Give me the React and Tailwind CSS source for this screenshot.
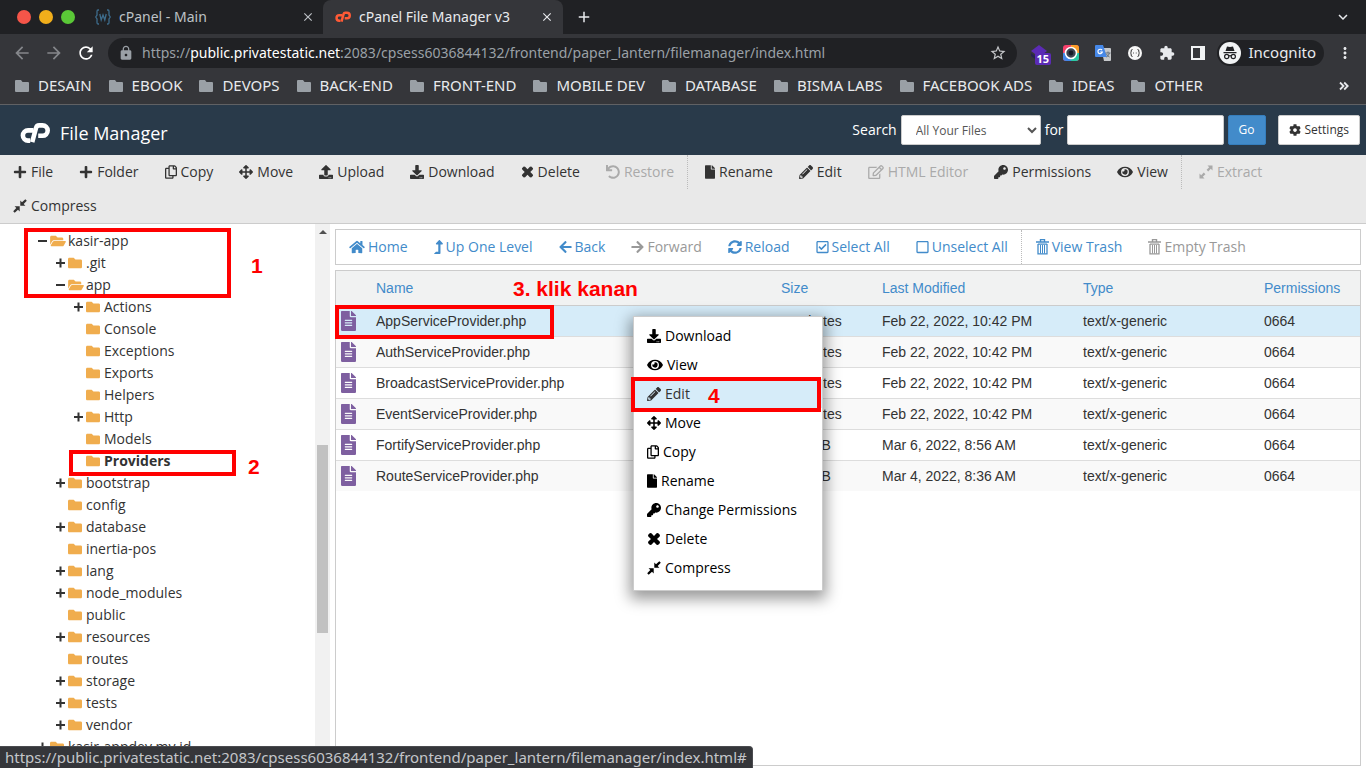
import React from "react";
import {
  FaPlus, FaRegCopy, FaArrowsAlt, FaUpload, FaDownload, FaUndo, FaFile, FaPencilAlt,
  FaRegEdit, FaKey, FaEye, FaHome, FaLevelUpAlt, FaArrowLeft, FaArrowRight, FaSyncAlt,
  FaRegCheckSquare, FaRegSquare, FaCog, FaFolder, FaFolderOpen, FaFileAlt,
} from "react-icons/fa";
import { MdArrowBack, MdArrowForward, MdRefresh, MdLock, MdStarBorder, MdExtension, MdAdd, MdClose, MdMoreVert, MdKeyboardArrowDown } from "react-icons/md";

const URL_REST = ":2083/cpsess6036844132/frontend/paper_lantern/filemanager/index.html";

function CpanelLogo({ className }) {
  return (
    <svg viewBox="0 0 30 21" className={className} fill="none" stroke="currentColor" strokeWidth="4.600" aria-hidden="true">
      <path d="M13.500 7.400H8a5.100 5.100 0 0 0 0 10.200h2.200" />
      <path d="M12.200 19.200 16 5q.7-2.600 3.200-2.600h3.300a5.200 5.200 0 0 1 0 10.400H18.200" strokeLinejoin="round" />
    </svg>
  );
}

function TimesIcon({ className }) {
  return (
    <svg viewBox="0 0 14 14" className={className} fill="currentColor" aria-hidden="true">
      <path d="M1 3 3 1l1.400.3L7 4l2.600-2.700L11 1l2 2-.3 1.400L10 7l2.700 2.600L13 11l-2 2-1.400-.3L7 10l-2.600 2.700L3 13l-2-2 .3-1.400L4 7 1.300 4.400z" />
    </svg>
  );
}

function CompressIcon({ className }) {
  return (
    <svg viewBox="0 0 14 14" className={className} fill="currentColor" aria-hidden="true">
      <path d="M7.300 1.600v5.100h5.100l-1.700-1.700 3.100-3.300L12.300.2 9 3.300zM6.700 12.400V7.300H1.600L3.300 9 .2 12.300l1.500 1.500L5 10.700z" />
    </svg>
  );
}

function ExpandIcon({ className }) {
  return (
    <svg viewBox="0 0 14 14" className={className} fill="currentColor" aria-hidden="true">
      <path d="M13.500.5v5L11.800 3.800 9.200 6.400 7.600 4.800l2.600-2.600L8.500.5zM.5 13.500v-5l1.700 1.700 2.600-2.600 1.600 1.600-2.600 2.600 1.700 1.700z" />
    </svg>
  );
}

function TrashIcon({ className }) {
  return (
    <svg viewBox="0 0 13 16" className={className} fill="none" stroke="currentColor" aria-hidden="true">
      <path d="M0 3h13M4.500 2.500V.6h4v1.900" strokeWidth="1.400" />
      <path d="M2 5v9.900h9V5M2 5.200h9" strokeWidth="1.300" />
      <path d="M4.500 6v8.500M6.500 6v8.500M8.500 6v8.500" />
    </svg>
  );
}

function BookmarkFolder() {
  return (
    <svg viewBox="0 0 14 12" className="h-3 w-3.5 shrink-0" fill="#9aa0a6" aria-hidden="true">
      <path d="M1 0h5l1.500 2H13a1 1 0 0 1 1 1v8a1 1 0 0 1-1 1H1a1 1 0 0 1-1-1V1a1 1 0 0 1 1-1z" />
    </svg>
  );
}

const bookmarks = ["DESAIN", "EBOOK", "DEVOPS", "BACK-END", "FRONT-END", "MOBILE DEV", "DATABASE", "BISMA LABS", "FACEBOOK ADS", "IDEAS", "OTHER"];

function Browser() {
  return (
    <div className="shrink-0 border-b border-[#606164] bg-[#35363a] font-['Noto_Sans',sans-serif] text-sm text-[#e8eaed]">
      <div className="flex h-[34px] items-center bg-[#202124] pl-[17px]">
        <div className="flex shrink-0 gap-2">
          <span className="size-3.5 rounded-full bg-[#f55549]" />
          <span className="size-3.5 rounded-full bg-[#f1ae1b]" />
          <span className="size-3.5 rounded-full bg-[#5ac837]" />
        </div>
        <div className="flex h-full w-[248px] items-center pl-5 text-[#bdc1c6]">
          <svg viewBox="0 0 16 16" className="mr-2 size-4" fill="none" stroke="#3d6c8c" strokeWidth="1.300" aria-hidden="true">
            <path d="M4 1H3Q2 1 2 2.500V6L.7 8 2 10v3.500Q2 15 3 15h1M12 1h1q1 0 1 1.500V6l1.300 2L14 10v3.500q0 1.500-1 1.500h-1M4.800 5l1.400 6L8 6l1.800 5 1.400-6" />
          </svg>
          <span className="grow">cPanel - Main</span>
          <button aria-label="Close tab" className="mr-2"><MdClose className="size-3.5" /></button>
        </div>
        <div className="flex h-full w-[240px] items-center rounded-t-lg bg-[#35363a] pl-3">
          <CpanelLogo className="mr-2 size-4 text-[#ff5a36]" />
          <span className="grow">cPanel File Manager v3</span>
          <button aria-label="Close tab" className="mr-[9px]"><MdClose className="size-3.5" /></button>
        </div>
        <button aria-label="New tab" className="ml-3"><MdAdd className="size-[18px]" /></button>
        <button aria-label="Search tabs" className="mr-3.5 ml-auto"><MdKeyboardArrowDown className="size-[18px]" /></button>
      </div>
      <div className="flex h-[38px] items-center pr-3 pl-3">
        <button aria-label="Back" className="mr-3 text-[#85878b]"><MdArrowBack className="size-5" /></button>
        <button aria-label="Forward" className="mr-3 text-[#85878b]"><MdArrowForward className="size-5" /></button>
        <button aria-label="Reload page" className="mr-3 text-white"><MdRefresh className="size-5" /></button>
        <div className="flex h-[30px] grow items-center rounded-full bg-[#202124] pr-2.5 pl-2.5">
          <MdLock className="mr-2 size-4 text-[#9aa0a6]" />
          <span className="grow text-[#9aa0a6]">https://<span className="text-white">public.privatestatic.net</span>{URL_REST}</span>
          <MdStarBorder className="size-[18px] text-[#c5c7ca]" />
        </div>
        <div className="ml-3.5 flex items-center gap-4">
          <div className="relative h-5 w-4">
            <svg viewBox="0 0 16 20" className="h-5 w-4" aria-hidden="true">
              <path d="M8 2 0 8l8 6 8-6z" fill="#5b2bb5" /><path d="m0 10 8 6v3L0 13z" fill="#252250" />
            </svg>
            <span className="absolute top-2.5 left-1 rounded-xs bg-[#5b2bb5] px-0.5 text-[11px] leading-3 font-bold text-white">15</span>
          </div>
          <svg viewBox="0 0 16 16" className="size-4" aria-hidden="true">
            <rect width="16" height="16" rx="3" fill="#f6416c" /><path d="M8 0h5a3 3 0 0 1 3 3v5H8z" fill="#fb9d28" />
            <path d="M8 8h8v5a3 3 0 0 1-3 3H8z" fill="#28c9a5" /><path d="M0 8h8v8H3a3 3 0 0 1-3-3z" fill="#4387e9" />
            <circle cx="8" cy="8" r="5.500" fill="#3d4653" stroke="#fff" strokeWidth="1.600" /><circle cx="8" cy="8" r="2.400" fill="#161b28" />
          </svg>
          <svg viewBox="0 0 16 16" className="size-4" aria-hidden="true">
            <path d="M6 3h9a1 1 0 0 1 1 1v11a1 1 0 0 1-1 1H9z" fill="#c6c8cb" /><path d="M1 0h7l4 12H1a1 1 0 0 1-1-1V1a1 1 0 0 1 1-1z" fill="#4688e8" />
            <path d="M7 5.200A2.200 2.200 0 1 0 7.300 7H5.200" fill="none" stroke="#fff" strokeWidth="1.200" />
            <path d="M10.500 8h5M13 6.500V8m1.500 0q-1 3-3 4m0-3q1 2 3 3" fill="none" stroke="#65717d" />
          </svg>
          <svg viewBox="0 0 16 16" className="size-4" aria-hidden="true">
            <circle cx="8" cy="8" r="7" fill="#f7f7f7" /><path d="M5.500 4.500Q4 4.500 4.200 6 4.300 7.500 3.500 8q.8.500.7 2-.2 1.500 1.300 1.500M10.500 4.500q1.500 0 1.300 1.500-.1 1.500.7 2-.8.500-.7 2 .2 1.500-1.300 1.500M6.200 8h.8m1.800 0h.8" fill="none" stroke="#333" />
          </svg>
          <MdExtension className="size-4" />
          <svg viewBox="0 0 14 14" className="size-3.5" aria-hidden="true"><path d="M0 0h14v14H0zM2 2v10h7V2z" fill="#f1f3f4" fillRule="evenodd" /></svg>
        </div>
        <div className="ml-3 flex h-[26px] items-center rounded-full bg-[#202124] pr-2 text-[15px]">
          <svg viewBox="0 0 22 22" className="mr-2 ml-0.5 size-[22px]" aria-hidden="true">
            <circle cx="11" cy="11" r="11" fill="#f1f3f4" />
            <path d="M8 4.500 11 5l3-.5L15.500 9h-9zM4.500 10h13v1.300h-13z" fill="#202124" />
            <g fill="none" stroke="#202124" strokeWidth="1.200"><circle cx="7.700" cy="14.500" r="2.100" /><circle cx="14.300" cy="14.500" r="2.100" /><path d="M9.800 14q1.200-.7 2.400 0" /></g>
          </svg>
          Incognito
        </div>
        <button aria-label="Browser menu" className="ml-3"><MdMoreVert className="size-[18px]" /></button>
      </div>
      <nav className="flex h-8 items-center gap-[17px] pr-[17px] pb-1 pl-[15px] text-[15px]">
        {bookmarks.map((b) => (
          <a key={b} href="#" className="flex items-center gap-[9px] whitespace-nowrap"><BookmarkFolder />{b}</a>
        ))}
        <button aria-label="More bookmarks" className="ml-auto">
          <svg viewBox="0 0 10 10" className="size-2.5" fill="none" stroke="currentColor" strokeWidth="1.800" aria-hidden="true"><path d="m1 1.500 3.500 3.500L1 8.500M5.200 1.500 8.700 5 5.200 8.500" /></svg>
        </button>
      </nav>
    </div>
  );
}

function Header() {
  return (
    <header className="flex h-[50px] shrink-0 items-center bg-[#293a4a] pr-1.5 pl-5 text-sm text-white">
      <CpanelLogo className="mt-1.5 mr-2.5 h-[21px] w-[30px]" />
      <h1 className="mt-1.5 grow text-lg">File Manager</h1>
      <label htmlFor="scope" className="mr-1">Search</label>
      <select id="scope" className="mr-1 h-[30px] w-[140px] rounded-xs border border-[#ccc] bg-white px-2.5 text-xs text-[#555]">
        <option>All Your Files</option>
      </select>
      <label htmlFor="query" className="mr-[3px]">for</label>
      <input id="query" type="text" className="mr-1 h-[30px] w-[157px] rounded-xs border border-[#ccc] bg-white px-2 text-xs text-[#555]" />
      <button className="mr-3 h-[30px] rounded-xs border border-[#357ebd] bg-[#428bca] px-2.5 text-xs">Go</button>
      <button className="flex h-[30px] items-center gap-1 rounded-xs border border-[#ccc] bg-white px-2.5 text-xs text-[#333]"><FaCog className="size-3" />Settings</button>
    </header>
  );
}

function Tool({ icon: Icon, size = "h-3.5 w-3.5", label, off, divided, nav }) {
  const lead = divided ? (nav ? "border-l border-dotted border-[#bbb] pl-[14px]" : "border-l border-dotted border-[#bbb] pl-[17px]") : "pl-[13px]";
  const tint = nav ? (off ? "text-[#999]" : "text-[#428bca]") : off ? "text-[#aaa]" : "text-[#333]";
  return (
    <button disabled={off} className={`flex h-[34px] items-center whitespace-nowrap pr-[13px] ${nav ? "gap-[3px]" : "gap-1"} ${lead} ${tint}`}>
      <Icon className={`shrink-0 ${size}`} />
      {label}
    </button>
  );
}

const mainTools = [
  { icon: FaPlus, label: "File" },
  { icon: FaPlus, label: "Folder" },
  { icon: FaRegCopy, size: "h-3.5 w-3", label: "Copy" },
  { icon: FaArrowsAlt, label: "Move" },
  { icon: FaUpload, label: "Upload" },
  { icon: FaDownload, label: "Download" },
  { icon: TimesIcon, size: "h-3.5 w-[13px]", label: "Delete" },
  { icon: FaUndo, label: "Restore", off: true },
  { icon: FaFile, size: "h-3.5 w-2.5", label: "Rename", divided: true },
  { icon: FaPencilAlt, label: "Edit" },
  { icon: FaRegEdit, size: "h-3.5 w-4", label: "HTML Editor", off: true },
  { icon: FaKey, label: "Permissions" },
  { icon: FaEye, size: "h-3.5 w-4", label: "View" },
  { icon: ExpandIcon, label: "Extract", off: true, divided: true },
  { icon: CompressIcon, label: "Compress" },
];

const navTools = [
  { icon: FaHome, size: "h-3.5 w-4", label: "Home" },
  { icon: FaLevelUpAlt, size: "h-3.5 w-[9px]", label: "Up One Level" },
  { icon: FaArrowLeft, size: "h-3.5 w-[13px]", label: "Back" },
  { icon: FaArrowRight, size: "h-3.5 w-[13px]", label: "Forward", off: true },
  { icon: FaSyncAlt, label: "Reload" },
  { icon: FaRegCheckSquare, size: "h-3.5 w-[13px]", label: "Select All" },
  { icon: FaRegSquare, size: "h-3.5 w-[13px]", label: "Unselect All" },
  { icon: TrashIcon, size: "h-4 w-[13px]", label: "View Trash", divided: true },
  { icon: TrashIcon, size: "h-4 w-[13px]", label: "Empty Trash", off: true },
];

const tree = [
  ["kasir-app", 0, "-"], [".git", 1, "+"], ["app", 1, "-"], ["Actions", 2, "+"], ["Console", 2], ["Exceptions", 2],
  ["Exports", 2], ["Helpers", 2], ["Http", 2, "+"], ["Models", 2], ["Providers", 2, "", true], ["bootstrap", 1, "+"],
  ["config", 1], ["database", 1, "+"], ["inertia-pos", 1], ["lang", 1, "+"], ["node_modules", 1, "+"], ["public", 1],
  ["resources", 1, "+"], ["routes", 1], ["storage", 1, "+"], ["tests", 1, "+"], ["vendor", 1, "+"], ["kasir-appdev.my.id", 0, "+"],
];
const indent = ["pl-[37px]", "pl-[55px]", "pl-[73px]"];

function Sidebar() {
  return (
    <aside className="relative flex w-[330px] shrink-0 overflow-hidden bg-white">
      <ul className="grow pt-1.5">
        {tree.map(([name, level, toggle, current]) => (
          <li key={name} className={`flex h-[22px] items-center ${indent[level]}`}>
            <svg viewBox="0 0 13 14" className="h-3.5 w-[13px]" fill="none" stroke="#333" strokeWidth="2" aria-hidden="true">
              {toggle && <path d={toggle === "+" ? "M1 7h9M5.500 2.500v9" : "M1 7h9"} />}
            </svg>
            {toggle === "-" ? <FaFolderOpen className="h-3.5 w-4 text-[#f0ad4e]" /> : <FaFolder className="mr-0.5 size-3.5 text-[#f0ad4e]" />}
            <a href="#" className={`ml-0.5 ${current ? "font-bold" : ""}`}>{name}</a>
          </li>
        ))}
      </ul>
      <div className="flex w-[15px] flex-col items-center bg-[#f1f1f1]">
        <svg viewBox="0 0 8 4" className="mt-1.5 h-1 w-2" aria-hidden="true"><path d="M4 0 8 4H0z" fill="#505050" /></svg>
        <div className="mt-[211px] h-[188px] w-[11px] bg-[#c1c1c1]" />
      </div>
      <Frame className="top-1 left-6 h-[70px] w-[207px]" />
      <Mark className="top-[31px] left-[251px]">1</Mark>
      <Frame className="top-[226px] left-[69px] h-[26px] w-[167px]" />
      <Mark className="top-[232px] left-[248px]">2</Mark>
    </aside>
  );
}

function Frame({ className }) {
  return <div className={`pointer-events-none absolute border-4 border-[#f00] ${className}`} />;
}

function Mark({ className, children }) {
  return <span className={`pointer-events-none absolute font-['Liberation_Sans',sans-serif] text-[21px] leading-[22px] font-bold whitespace-nowrap text-[#f00] ${className}`}>{children}</span>;
}

const files = [
  ["AppServiceProvider.php", "403 bytes", "Feb 22, 2022, 10:42 PM"],
  ["AuthServiceProvider.php", "623 bytes", "Feb 22, 2022, 10:42 PM"],
  ["BroadcastServiceProvider.php", "380 bytes", "Feb 22, 2022, 10:42 PM"],
  ["EventServiceProvider.php", "709 bytes", "Feb 22, 2022, 10:42 PM"],
  ["FortifyServiceProvider.php", "2.03 KB", "Mar 6, 2022, 8:56 AM"],
  ["RouteServiceProvider.php", "1.66 KB", "Mar 4, 2022, 8:36 AM"],
];

const menu = [
  [FaDownload, "w-3.5", "Download"], [FaEye, "w-4", "View"], [FaPencilAlt, "w-3.5", "Edit"], [FaArrowsAlt, "w-3.5", "Move"],
  [FaRegCopy, "w-3", "Copy"], [FaFile, "w-2.5", "Rename"], [FaKey, "w-3.5", "Change Permissions"], [TimesIcon, "w-3.5", "Delete"], [CompressIcon, "w-3.5", "Compress"],
];

function ContextMenu() {
  return (
    <ul className="absolute top-[45px] left-[297px] w-[190px] border border-[#ccc] bg-white pt-1 pb-2 text-black shadow-[0_5px_14px_3px_rgba(0,0,0,0.4)]">
      {menu.map(([Icon, w, label]) => (
        <li key={label} className="relative">
          <button className={`flex h-[29px] w-full items-center gap-1 pl-[13px] ${label === "Edit" ? "bg-[#d6ecf9] text-[#333]" : ""}`}>
            <Icon className={`h-3.5 shrink-0 ${w}`} />{label}
          </button>
          {label === "Edit" && (
            <>
              <Frame className="-top-0.5 -left-[3px] h-[35px] w-[190px]" />
              <Mark className="top-1.5 left-[74px]">4</Mark>
            </>
          )}
        </li>
      ))}
    </ul>
  );
}

function FileTable() {
  return (
    <div className="relative grow border border-[#ccc] bg-white font-['Liberation_Sans',sans-serif]">
      <table className="w-full table-fixed border-collapse text-left">
        <colgroup>
          <col className="w-10" /><col /><col className="w-[101px]" /><col className="w-[201px]" /><col className="w-[181px]" /><col className="w-24" />
        </colgroup>
        <thead>
          <tr className="h-[34px] border-b border-[#ccc] bg-[#f1f2f2] text-[#428bca]">
            <th aria-label="Kind" /><th className="font-normal">Name</th><th className="font-normal">Size</th><th className="font-normal">Last Modified</th><th className="font-normal">Type</th><th className="font-normal">Permissions</th>
          </tr>
        </thead>
        <tbody>
          {files.map(([name, size, date], i) => (
            <tr key={name} className={`h-[31px] border-b border-[#ddd] last:border-b-0 ${i === 0 ? "bg-[#d6ecf9]" : i % 2 ? "bg-[#f9f9f9]" : ""}`}>
              <td><FaFileAlt className="ml-[5px] h-5 w-[15px] text-[#7e5fa0]" /></td>
              <td>{name}</td><td>{size}</td><td>{date}</td><td>text/x-generic</td><td>0664</td>
            </tr>
          ))}
        </tbody>
      </table>
      <Frame className="top-[34px] -left-px h-[34px] w-[219px]" />
      <Mark className="top-[7px] left-[177px]">3. klik kanan</Mark>
      <div className="font-['Open_Sans',sans-serif]"><ContextMenu /></div>
    </div>
  );
}

export default function App() {
  return (
    <div className="relative flex h-screen flex-col overflow-hidden bg-white font-['Open_Sans',sans-serif] text-sm text-[#333]">
      <Browser />
      <Header />
      <div className="flex shrink-0 flex-wrap border-b border-[#ccc] bg-[#e9e9e9]">
        {mainTools.map((t) => <Tool key={t.label} {...t} />)}
      </div>
      <main className="flex min-h-0 grow">
        <Sidebar />
        <section className="flex min-w-0 grow flex-col gap-[5px] pt-[5px] pr-[5px] pb-0.5 pl-[5px]">
          <div className="flex shrink-0 overflow-hidden border border-[#ccc]">
            {navTools.map((t) => <Tool key={t.label} {...t} nav />)}
          </div>
          <FileTable />
        </section>
      </main>
      <div className="absolute bottom-0 left-0 rounded-tr-sm border-t border-r border-[#4a4b4f] bg-[#35363a] px-[5px] font-['Noto_Sans',sans-serif] text-[15px] leading-[21px] text-[#c4c6ca]">
        https://public.privatestatic.net{URL_REST}#
      </div>
    </div>
  );
}
